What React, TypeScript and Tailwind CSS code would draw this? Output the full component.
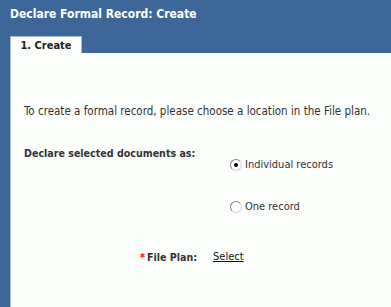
import React from 'react';

const App: React.FC = () => {
  return (
    <div
      className="w-[391px] h-[307px] bg-[#3d6699] flex flex-col overflow-hidden font-stretch-condensed"
      style={{ fontFamily: '"DejaVu Sans Condensed", "DejaVu Sans", sans-serif' }}
    >
      {/* Header */}
      <div className="h-[36px] pl-[10px] pt-[6px]">
        <h1 className="text-[12px] font-bold text-white leading-[16px]">Declare Formal Record: Create</h1>
      </div>

      {/* Tabs */}
      <div className="h-[17px] pl-[10px] flex">
        <div className="w-[72px] h-[18px] bg-[#fcfefc] border border-b-0 border-[#a9b9cf] flex items-center justify-center text-[11px] text-[#222] font-bold leading-none">
          1. Create
        </div>
      </div>

      {/* Panel */}
      <div className="flex-1 ml-[10px] bg-[#fcfefc] border-l border-[#a9b9cf] text-[11px] text-[#333]">
        <p className="pl-[13px] pt-[51px] leading-[14px] whitespace-nowrap text-[11.5px]">To create a formal record, please choose a location in the File plan.</p>

        <div className="pl-[13px] pt-[28px]">
          <div className="font-bold leading-[14px] text-[10.6px]">Declare selected documents as:</div>
        </div>

        <div className="pl-[219px] mt-[-2px] flex flex-col gap-[28px]">
          <label className="flex items-center gap-[3px] leading-[14px]">
            <span className="w-[12px] h-[12px] rounded-full border border-t-[#808080] border-l-[#808080] border-r-[#d4d4d4] border-b-[#d4d4d4] bg-white flex items-center justify-center">
              <span className="w-[4px] h-[4px] rounded-full bg-black" />
            </span>
            Individual records
          </label>
          <label className="flex items-center gap-[3px] leading-[14px]">
            <span className="w-[12px] h-[12px] rounded-full border border-t-[#808080] border-l-[#808080] border-r-[#d4d4d4] border-b-[#d4d4d4] bg-white" />
            One record
          </label>
        </div>

        <div className="flex items-center pt-[36px] leading-[14px]">
          <div className="w-[202px] flex justify-end pr-[16px] font-bold text-[10.6px]">
            <span className="text-[#e00] mr-[2px]">*</span>File Plan:
          </div>
          <a className="underline text-[#111]">Select</a>
        </div>
      </div>
    </div>
  );
};

export default App;
